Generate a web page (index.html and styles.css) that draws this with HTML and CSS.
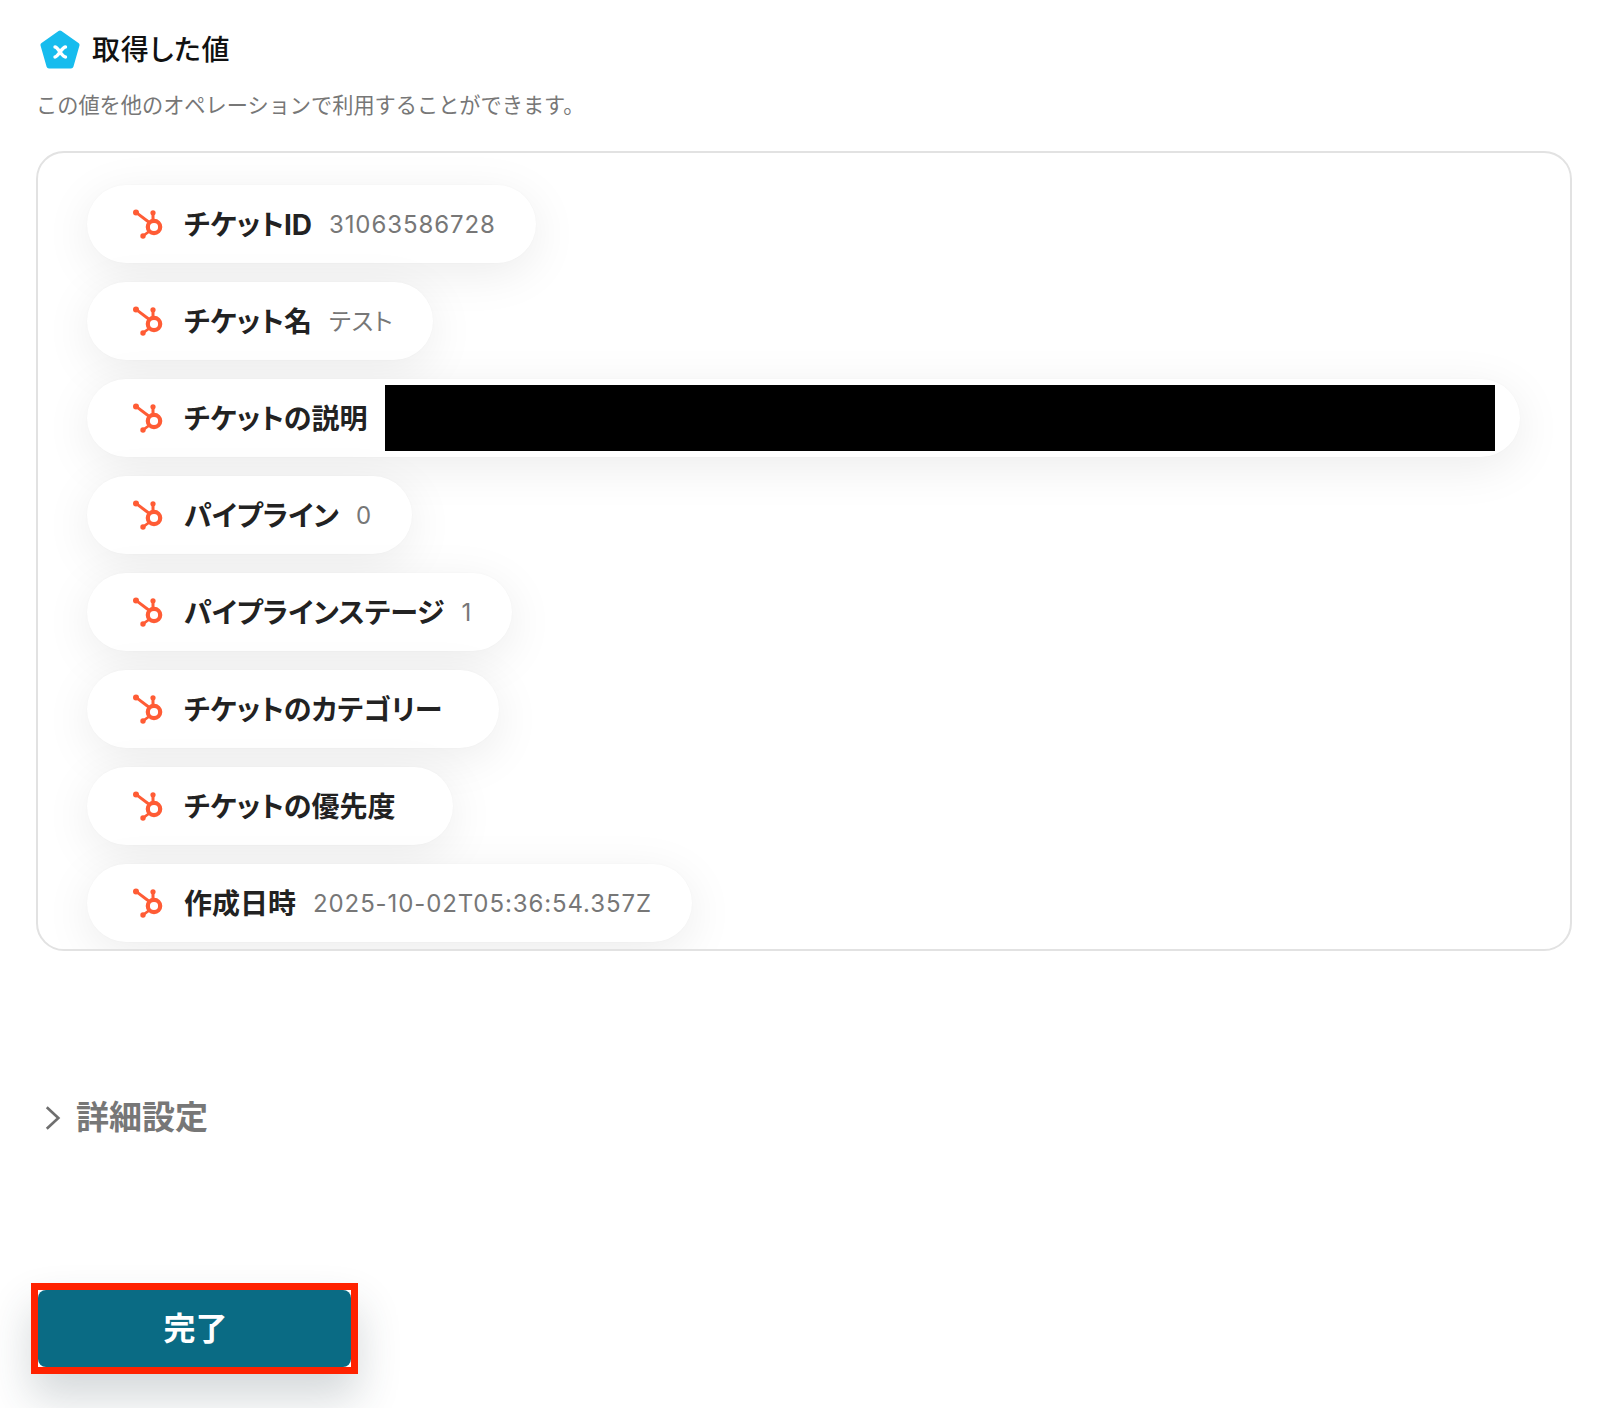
FILE: index.html
```html
<!DOCTYPE html>
<html lang="ja">
<head>
  <meta charset="UTF-8" />
  <meta name="viewport" content="width=device-width, initial-scale=1.0" />
  <title>取得した値</title>
  <link rel="stylesheet" href="styles.css">
</head>
<body>
  <svg class="icon-defs" width="0" height="0">
    <symbol id="hubspot" viewBox="0 0 31 30">
      <g fill="#ff5c35">
        <circle cx="3" cy="3.400" r="3" />
        <circle cx="20" cy="3.800" r="2.600" />
        <circle cx="10" cy="27" r="2.700" />
      </g>
      <g fill="none" stroke="#ff5c35">
        <path d="M3 3.400 L17 14" stroke-width="3" />
        <path d="M20 4 V12" stroke-width="3" />
        <path d="M10 27 L16 22.500" stroke-width="2.800" />
        <circle cx="21" cy="18" r="6.200" stroke-width="4.200" />
      </g>
    </symbol>
  </svg>

  <main class="page">
    <header class="title-row">
      <svg class="logo" viewBox="0 0 40 40">
        <path d="M20 3 L37 15 L31 36 H9 L3 15 Z" fill="#17bcee" stroke="#17bcee" stroke-width="5" stroke-linejoin="round" />
        <path d="M15 17 C18 17 22 27 25.500 27 M25.500 17 C22 17 18 27 15 27" fill="none" stroke="#fff" stroke-width="3.400" stroke-linecap="round" />
      </svg>
      <h1>取得した値</h1>
    </header>
    <p class="subtitle">この値を他のオペレーションで利用することができます。</p>

    <section class="values">
      <div class="pill">
        <svg class="hs"><use href="#hubspot" /></svg>
        <span class="label">チケットID</span>
        <span class="value">31063586728</span>
      </div>
      <div class="pill">
        <svg class="hs"><use href="#hubspot" /></svg>
        <span class="label">チケット名</span>
        <span class="value value-ja">テスト</span>
      </div>
      <div class="pill pill-wide">
        <svg class="hs"><use href="#hubspot" /></svg>
        <span class="label">チケットの説明</span>
        <span class="redacted"></span>
      </div>
      <div class="pill">
        <svg class="hs"><use href="#hubspot" /></svg>
        <span class="label">パイプライン</span>
        <span class="value">0</span>
      </div>
      <div class="pill">
        <svg class="hs"><use href="#hubspot" /></svg>
        <span class="label">パイプラインステージ</span>
        <span class="value">1</span>
      </div>
      <div class="pill">
        <svg class="hs"><use href="#hubspot" /></svg>
        <span class="label">チケットのカテゴリー</span>
        <span class="value"></span>
      </div>
      <div class="pill">
        <svg class="hs"><use href="#hubspot" /></svg>
        <span class="label">チケットの優先度</span>
        <span class="value"></span>
      </div>
      <div class="pill">
        <svg class="hs"><use href="#hubspot" /></svg>
        <span class="label">作成日時</span>
        <span class="value">2025-10-02T05:36:54.357Z</span>
      </div>
    </section>

    <div class="details">
      <svg class="chevron" viewBox="0 0 18 28">
        <path d="M2 2 L15 14 L2 26" fill="none" stroke="#6f6f6f" stroke-width="3" />
      </svg>
      <span>詳細設定</span>
    </div>

    <div class="done-frame">
      <button class="done">完了</button>
    </div>
  </main>
</body>
</html>
```

FILE: styles.css
```css
* {
  margin: 0;
  padding: 0;
  box-sizing: border-box;
}
body {
  background: white;
  font-family: Inter, 'Noto Sans CJK JP', sans-serif;
  font-feature-settings: 'palt';
  color: #222;
  overflow: hidden;
}
.icon-defs {
  position: absolute;
}
.page {
  height: 1408px;
  padding: 29px 48px 0 36px;
}
.title-row {
  display: flex;
  align-items: center;
  gap: 12px;
  height: 42px;
  padding-left: 4px;
}
.logo {
  width: 40px;
  height: 40px;
}
.title-row h1 {
  padding-bottom: 4px;
  font-size: 28px;
  font-weight: 500;
  letter-spacing: 0.8px;
  color: #111;
}
.subtitle {
  margin-top: 19px;
  font-size: 21.2px;
  font-feature-settings: normal;
  line-height: 30px;
  color: #777;
}
.values {
  display: flex;
  flex-direction: column;
  align-items: flex-start;
  gap: 19px;
  height: 800px;
  margin-top: 31px;
  padding: 32px 50px 0 49px;
  border: 2px solid #e2e2e2;
  border-radius: 28px;
  overflow: hidden;
}
.pill {
  display: flex;
  align-items: center;
  flex-shrink: 0;
  height: 78px;
  padding: 0 40px 0 46px;
  background: white;
  border-radius: 39px;
  box-shadow: 0 10px 48px rgba(0, 0, 0, 0.08), 0 0 2px rgba(0, 0, 0, 0.03);
}
.pill-wide {
  align-self: stretch;
  padding-right: 25px;
}
.hs {
  width: 31px;
  height: 30px;
  margin-right: 20px;
  flex-shrink: 0;
}
.label {
  padding-bottom: 3px;
  font-size: 28px;
  font-weight: 700;
  white-space: nowrap;
}
.value {
  margin-left: 17px;
  font-size: 24px;
  letter-spacing: 0.9px;
  color: #777;
  white-space: nowrap;
}
.value-ja {
  padding-bottom: 3px;
}
.redacted {
  flex: 1;
  height: 66px;
  margin-left: 17px;
  background: black;
}
.details {
  display: flex;
  align-items: center;
  gap: 15px;
  margin-top: 140px;
  padding-left: 9px;
  font-size: 33px;
  font-weight: 700;
  color: #777;
}
.chevron {
  width: 16px;
  height: 28px;
  margin-top: 5px;
}
.done-frame {
  width: 327px;
  height: 91px;
  margin: 144px 0 0 -5px;
  border: 7px solid #ff2200;
  box-shadow: 0 24px 44px rgba(40, 60, 70, 0.2);
}
.done {
  display: block;
  width: 100%;
  height: 100%;
  padding: 0 0 6px 2px;
  border: none;
  border-radius: 8px;
  background: #0a6b84;
  color: white;
  font-family: inherit;
  font-size: 32px;
  font-weight: 700;
}
```
